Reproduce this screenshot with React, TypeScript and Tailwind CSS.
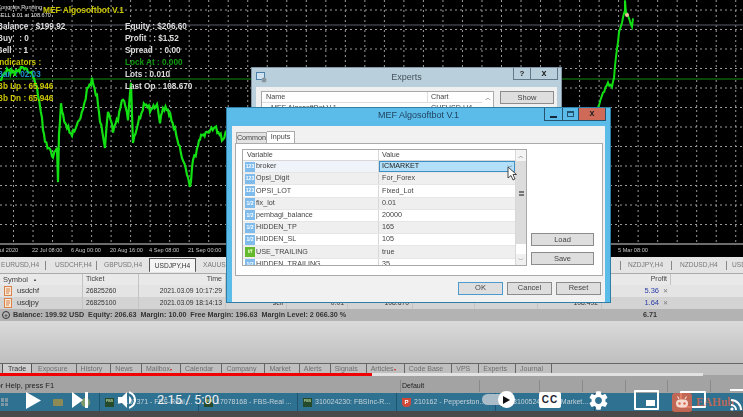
import React from "react";
import { MdSettings, MdVolumeUp } from "react-icons/md";

// rough price line, read off the picture; noise added so it looks like H4 candles
const leftPts = [
  [0, 80], [7, 70], [15, 73], [23, 67], [33, 75], [38, 93], [42, 120], [45, 142], [50, 150], [53, 157],
  [57, 147], [58, 181], [59, 137], [61, 103], [63, 117], [67, 127], [72, 135], [78, 123], [83, 110], [87, 90],
  [92, 80], [97, 97], [100, 120], [105, 147], [108, 110], [113, 130], [118, 118], [123, 97], [128, 118], [131, 83],
  [133, 143], [138, 123], [145, 103], [150, 110], [157, 105], [160, 122], [163, 108], [168, 110], [175, 130],
  [182, 157], [187, 173], [190, 188], [193, 160], [197, 150], [200, 137], [208, 132], [215, 127], [223, 140], [228, 130],
];
const rightPts = [
  [598, 107], [603, 93], [608, 83], [612, 87], [614, 77], [616, 57], [619, 33], [622, 22], [625, 10], [625, 0],
  [626, 14], [628, 15], [632, 28], [633, 17], [634, 28],
];

const jagged = (pts: number[][], amp: number) => {
  let d = "";
  let n = 0;
  for (let i = 0; i < pts.length - 1; i++) {
    const [x1, y1] = pts[i];
    const [x2, y2] = pts[i + 1];
    const steps = Math.max(1, Math.round(Math.abs(x2 - x1) / 1.2));
    for (let s = 0; s < steps; s++) {
      const t = s / steps;
      const off = Math.sin(n * 2.3) * Math.cos(n * 0.7) * amp;
      d += `${d ? "L" : "M"}${(x1 + (x2 - x1) * t).toFixed(1)} ${(y1 + (y2 - y1) * t + off).toFixed(1)}`;
      n++;
    }
  }
  return d;
};

const hLines = Array.from({ length: 12 }, (_, i) => 10 + i * 19.5);
const vLines = Array.from({ length: 38 }, (_, i) => 13.5 + i * 19.52);

const Chart = () => (
  <svg width="743" height="257" className="absolute left-0 top-0">
    {hLines.map((y) => (
      <line key={y} x1="0" x2="743" y1={y} y2={y} stroke="#9a9a9a" strokeDasharray="2 3" />
    ))}
    {vLines.map((x) => (
      <line key={x} x1={x} x2={x} y1="0" y2="243" stroke="#9a9a9a" strokeDasharray="2 3" />
    ))}
    <line x1="0" x2="743" y1="25" y2="25" stroke="#5c5c6e" />
    <line x1="0" x2="743" y1="79" y2="79" stroke="#0d5f0d" strokeWidth="1.6" />
    <line x1="0" x2="743" y1="244" y2="244" stroke="#d8d8d8" />
    <path d={jagged(leftPts, 3)} fill="none" stroke="#12e012" strokeWidth="2.2" />
    <path d={jagged(rightPts, 1.5)} fill="none" stroke="#12e012" strokeWidth="2" />
    <circle cx="627" cy="15" r="2" fill="#f2b9a0" />
  </svg>
);

const Overlay = () => (
  <>
    <div className="absolute left-0 top-[3px] flex flex-col whitespace-nowrap text-[5.6px] leading-[8px] text-[#e6e6e6]">
      <span className="-ml-[3px]">Congrats Running</span>
      <span className="-ml-[3px]">SELL 0.01 at 108.670</span>
    </div>
    <div className="absolute left-[43px] top-[3px] text-[8.4px] font-bold leading-[14px] text-[#c9c400]">MEF Algosoftbot V.1</div>
    <div className="absolute -left-[3px] top-[21px] flex flex-col whitespace-nowrap text-[8.2px] font-bold leading-[12px] text-[#dcdcdc]">
      <span>Balance : $199.92</span>
      <span>Buy &nbsp; : 0</span>
      <span>Sell &nbsp; : 1</span>
      <span className="text-[#c9c400]">Indicators :</span>
      <span className="text-[#1f8fc9]">Bar &nbsp;: 02.03</span>
      <span className="text-[#c9c400]">Bb Up : 65.946</span>
      <span className="text-[#c9c400]">Bb Dn : 65.946</span>
    </div>
    <div className="absolute left-[125px] top-[21px] flex flex-col whitespace-nowrap text-[8.2px] font-bold leading-[12px] text-[#dcdcdc]">
      <span>Equity : $206.60</span>
      <span>Profit &nbsp; : $1.52</span>
      <span>Spread &nbsp; : 0.00</span>
      <span className="text-[#0f9a0f]">Lock At : 0.000</span>
      <span>Lots : 0.010</span>
      <span>Last Op : 108.670</span>
    </div>
  </>
);

const AxisDates = () => (
  <div className="absolute left-0 top-[246px] flex w-[743px] whitespace-nowrap text-[5.6px] leading-[9px] text-[#c8c8c8]">
    <span className="-ml-[3px] w-[35px] shrink-0">Jul 2020</span>
    <span className="w-[39px] shrink-0">22 Jul 08:00</span>
    <span className="w-[39px] shrink-0">6 Aug 00:00</span>
    <span className="w-[39px] shrink-0">20 Aug 16:00</span>
    <span className="w-[39px] shrink-0">4 Sep 08:00</span>
    <span className="w-[39px] shrink-0">21 Sep 00:00</span>
    <span className="ml-auto w-[125px] shrink-0">5 Mar 08:00</span>
  </div>
);

const PairTabs = () => (
  <div className="flex h-[16px] items-center overflow-hidden whitespace-nowrap bg-[#e4e4e4] text-[6.6px] text-[#777]">
    <span className="-ml-[3px] w-[48px] shrink-0 pl-[4px]">EURUSD,H4</span>
    <span className="h-[9px] w-px shrink-0 bg-[#888]" />
    <span className="w-[50px] shrink-0 pl-[9px]">USDCHF,H4</span>
    <span className="h-[9px] w-px shrink-0 bg-[#888]" />
    <span className="w-[52px] shrink-0 pl-[7px]">GBPUSD,H4</span>
    <span className="flex h-[14px] w-[47px] shrink-0 items-center justify-center rounded-[1px] border border-[#555] border-b-0 bg-[#f4f4f4] text-[#333]">USDJPY,H4</span>
    <span className="w-[424px] shrink-0 pl-[7px]">XAUUSD,H4</span>
    <span className="h-[9px] w-px shrink-0 bg-[#888]" />
    <span className="w-[50px] shrink-0 pl-[7px]">NZDJPY,H4</span>
    <span className="h-[9px] w-px shrink-0 bg-[#888]" />
    <span className="w-[54px] shrink-0 pl-[8px]">NZDUSD,H4</span>
    <span className="h-[9px] w-px shrink-0 bg-[#888]" />
    <span className="shrink-0 pl-[5px]">USDCAD,H4</span>
  </div>
);

const gridCols = "grid grid-cols-[83px_56px_87px_61px_61px_65px_62px_63px_64px_69px_1fr]";

const Cell = ({ children, right }: { children?: React.ReactNode; right?: boolean }) => (
  <div className={`flex items-center border-r border-[#c4c4c4] px-[3px] ${right ? "justify-end" : ""}`}>{children}</div>
);

const OrderIcon = () => (
  <svg width="8" height="10" viewBox="0 0 8 10" className="mr-[5px] ml-[1px] shrink-0">
    <rect x="0.5" y="0.5" width="7" height="9" fill="#f7e7d4" stroke="#d9824a" />
    <path d="M2 3h4M2 5h4M2 7h3" stroke="#d9824a" />
  </svg>
);

const OrderRow = ({ sym, ticket, time, price, profit, bg }: { sym: string; ticket: string; time: string; price: string; profit: string; bg: string }) => (
  <div className={`${gridCols} h-[12px] text-[6.8px] text-[#333] ${bg}`}>
    <Cell>
      <OrderIcon />
      <span className="text-[7.5px]">{sym}</span>
    </Cell>
    <Cell>{ticket}</Cell>
    <Cell right>{time}</Cell>
    <Cell right>sell</Cell>
    <Cell right>0.01</Cell>
    <Cell right>108.670</Cell>
    <Cell />
    <Cell />
    <Cell right>{price}</Cell>
    <div className="flex items-center justify-end gap-[4px] pr-[3px]">
      <span className="text-[7.5px] text-[#2b3fa8]">{profit}</span>
      <span className="text-[6px] text-[#777]">✕</span>
    </div>
    <div />
  </div>
);

const OrdersTable = () => (
  <div className="flex flex-col">
    <div className={`${gridCols} h-[12px] border-t border-[#aaa] bg-[#e9e9e9] text-[7px] text-[#444]`}>
      <Cell>
        <span className="text-[7.5px]">Symbol</span>
        <span className="ml-[5px] text-[4px]">▲</span>
      </Cell>
      <Cell>Ticket</Cell>
      <Cell right>Time</Cell>
      <Cell />
      <Cell />
      <Cell />
      <Cell />
      <Cell />
      <Cell />
      <Cell right>Profit</Cell>
      <div />
    </div>
    <OrderRow sym="usdchf" ticket="26825260" time="2021.03.09 10:17:29" price="0.92992" profit="5.36" bg="bg-[#e4e4e4]" />
    <OrderRow sym="usdjpy" ticket="26825100" time="2021.03.09 18:14:13" price="108.492" profit="1.64" bg="bg-[#d3d3d3]" />
    <div className="flex h-[12px] items-center bg-[#b3b3b3] text-[7.2px] font-bold text-[#333]">
      <span className="ml-[2px] mr-[2px] flex h-[8px] w-[8px] items-center justify-center rounded-full border border-[#333] text-[6px] leading-none">+</span>
      <span className="ml-[1px] whitespace-pre">Balance: 199.92 USD  Equity: 206.63  Margin: 10.00  Free Margin: 196.63  Margin Level: 2 066.30 %</span>
      <span className="ml-auto mr-[86px]">6.71</span>
    </div>
  </div>
);

const bottomTabs = ["Exposure", "History", "News", "Mailbox", "Calendar", "Company", "Market", "Alerts", "Signals", "Articles", "Code Base", "VPS", "Experts", "Journal"];

const BottomTabs = () => (
  <div className="flex h-[12px] items-start overflow-hidden whitespace-nowrap border-t border-[#666] bg-[#bfbfbf] text-[7px] leading-[10px] text-[#6e6e6e]">
    <span className="ml-[2px] mr-[5px] h-[12px] w-[30px] shrink-0 border-x border-[#555] bg-[#cfcfcf] pl-[5px] font-medium text-[#333]">Trade</span>
    {bottomTabs.map((t) => (
      <span key={t} className="mr-[3px] shrink-0 border-r border-[#666] pl-[1px] pr-[8px]">
        {t}
        {(t === "Mailbox" || t === "Articles") && <span className="text-[4px] text-[#d02020]">▾</span>}
      </span>
    ))}
  </div>
);

const StatusBar = () => (
  <div className="flex h-[18px] items-end overflow-hidden whitespace-nowrap bg-[#a3a3a3] pb-[1px] text-[7.5px] leading-[12px] text-[#222]">
    <span className="-ml-[8px] w-[408px] shrink-0">For Help, press F1</span>
    <span className="h-[12px] w-[79px] shrink-0 border-l border-[#8a8a8a] pl-[1px] text-[7px]">Default</span>
    <span className="h-[12px] w-[60px] shrink-0 border-l border-[#8a8a8a]" />
    <span className="h-[12px] w-[43px] shrink-0 border-l border-[#8a8a8a]" />
    <span className="h-[12px] w-[43px] shrink-0 border-l border-[#8a8a8a]" />
    <span className="h-[12px] w-[42px] shrink-0 border-l border-[#8a8a8a]" />
    <span className="h-[12px] w-[43px] shrink-0 border-l border-[#8a8a8a]" />
    <span className="h-[12px] w-[33px] shrink-0 border-l border-[#8a8a8a]" />
  </div>
);

const TaskItem = ({ label, red }: { label: string; red?: boolean }) => (
  <div className="flex h-[18px] w-[99px] shrink-0 items-center gap-[3px] overflow-hidden whitespace-nowrap border-r border-[#1f5470] pl-[5px] text-[7px] text-[#c6d3da]">
    {red ? (
      <span className="flex h-[9px] w-[9px] shrink-0 items-center justify-center rounded-b-[4px] bg-[#d04a3a] text-[6px] font-bold text-white">P</span>
    ) : (
      <span className="flex h-[9px] w-[9px] shrink-0 items-center justify-center bg-[#254a2c] text-[3.5px] font-bold text-[#b9d6a0]">FBS</span>
    )}
    <span>{label}</span>
  </div>
);

const TaskBar = () => (
  <div className="flex h-[18px] items-center overflow-hidden bg-[#2f7191]">
    <div className="flex h-full w-[100px] shrink-0 items-center border-r border-[#1f5470] pl-[1px]">
      <div className="grid h-[8px] w-[7px] grid-cols-2 gap-px">
        <span className="bg-[#7d97a5]" />
        <span className="bg-[#7d97a5]" />
        <span className="bg-[#7d97a5]" />
        <span className="bg-[#7d97a5]" />
      </div>
      <span className="ml-[45px] h-[7px] w-[10px] rounded-[1px] bg-[#8d8a55]" />
      <span className="ml-[18px] h-[9px] w-[9px] rounded-full bg-[#7c9a6a]" />
    </div>
    <TaskItem label="14107371 - FBS-Real ..." />
    <TaskItem label="17078168 - FBS-Real ..." />
    <TaskItem label="310024230: FBSInc-R..." />
    <TaskItem red label="210162 - Pepperston..." />
    <TaskItem label="310052422: IC Market..." />
  </div>
);

const Btn = ({ label, cls }: { label: string; cls: string }) => (
  <div className={`flex items-center justify-center border border-[#8c8c8c] bg-[#dedede] text-[7.5px] text-[#444] ${cls}`}>{label}</div>
);

const rows = [
  { name: "broker", value: "ICMARKET", icon: "123", kind: "b" },
  { name: "Opsi_Digit", value: "For_Forex", icon: "123", kind: "b" },
  { name: "OPSI_LOT", value: "Fixed_Lot", icon: "123", kind: "b" },
  { name: "fix_lot", value: "0.01", icon: "1/2", kind: "b" },
  { name: "pembagi_balance", value: "20000", icon: "1/2", kind: "b" },
  { name: "HIDDEN_TP", value: "165", icon: "1/2", kind: "b" },
  { name: "HIDDEN_SL", value: "105", icon: "1/2", kind: "b" },
  { name: "USE_TRAILING", value: "true", icon: "t/f", kind: "g" },
  { name: "HIDDEN_TRAILING", value: "35", icon: "1/2", kind: "b" },
];

const InputsTable = () => (
  <div className="flex h-[117px] w-[285px] shrink-0 overflow-hidden border border-[#a8a8a8] bg-white text-[7.2px] text-[#444]">
    <div className="flex w-[273px] flex-col">
      <div className="flex h-[11px] shrink-0 items-center border-b border-[#d8d8d8] bg-white">
        <div className="w-[136px] border-r border-[#d8d8d8] pl-[4px]">Variable</div>
        <div className="pl-[3px]">Value</div>
      </div>
      {rows.map((r, i) => (
        <div key={r.name} className={`flex h-[12.2px] shrink-0 items-center border-b border-[#e6e6e6] ${i === 0 ? "bg-[#eef4f9]" : i % 2 === 1 ? "bg-[#f0efef]" : "bg-white"}`}>
          <div className="flex h-full w-[136px] items-center gap-[1px] border-r border-[#d8d8d8] pl-[2px]">
            <span className={`flex h-[10px] w-[10px] shrink-0 items-center justify-center text-[5px] font-bold leading-none ${r.kind === "g" ? "bg-[#63b82c] text-[#eaffd0]" : "bg-[#7fbcec] text-white"}`}>{r.icon}</span>
            <span>{r.name}</span>
          </div>
          {i === 0 ? (
            <div className="flex h-full flex-1 items-center justify-between border border-[#3f8fc7] bg-[#b3dff8] pl-[2px] pr-[1px] text-[#222]">
              <span>{r.value}</span>
              <span className="text-[6px] leading-none text-[#333]">﹀</span>
            </div>
          ) : (
            <div className="pl-[3px]">{r.value}</div>
          )}
        </div>
      ))}
    </div>
    <div className="flex w-[11px] shrink-0 flex-col items-center border-l border-[#d8d8d8] bg-[#dcdcdc]">
      <span className="flex h-[11px] w-full items-center justify-center bg-[#f4f4f4] text-[6px] leading-none text-[#555]">︿</span>
      <span className="mt-[30px] h-[5px] w-[5px] border-y-2 border-[#777]" />
      <span className="mt-auto h-[10px] w-full bg-white" />
      <span className="flex h-[11px] w-full items-center justify-center bg-[#f0f0f0] text-[6px] leading-none text-[#555]">﹀</span>
    </div>
  </div>
);

const ExpertsWindow = () => (
  <div className="absolute left-[251px] top-[67px] flex h-[60px] w-[311px] flex-col border border-[#7f97a6] bg-[#b9d0dc]">
    <div className="relative flex h-[19px] shrink-0 items-center justify-center text-[9px] text-[#44525c]">
      <svg width="11" height="11" viewBox="0 0 11 11" className="absolute left-[4px] top-[4px]">
        <rect x="0.5" y="0.5" width="8" height="7" fill="#cfe2f2" stroke="#4d80a8" />
        <circle cx="8" cy="8" r="2.5" fill="#8a97a0" />
      </svg>
      Experts
      <div className="absolute right-[3px] top-0 flex h-[12px]">
        <span className="flex w-[18px] items-center justify-center border border-t-0 border-[#62798a] text-[8px] font-bold text-[#222]">?</span>
        <span className="flex w-[27px] items-center justify-center border border-l-0 border-t-0 border-[#62798a] text-[9px] font-bold text-[#222]">x</span>
      </div>
    </div>
    <div className="mx-[4px] flex flex-1 gap-[6px] bg-[#f0f0f0] pl-[5px] pr-[3px] pt-[4px] text-[7.2px] text-[#444]">
      <div className="flex h-[40px] w-[233px] shrink-0 border border-[#aaa] bg-white">
        <div className="flex w-[222px] flex-col">
          <div className="flex h-[11px] border-b border-[#ddd]">
            <span className="w-[166px] border-r border-[#ddd] pl-[4px]">Name</span>
            <span className="pl-[3px]">Chart</span>
          </div>
          <div className="flex h-[10px] items-center">
            <span className="w-[166px] pl-[9px]">MEF AlgosoftBot V.1</span>
            <span className="pl-[3px]">CHFUSD,H4</span>
          </div>
        </div>
        <span className="flex h-[11px] w-[11px] items-center justify-center text-[6px] leading-none">︿</span>
      </div>
      <Btn label="Show" cls="h-[13px] w-[54px]" />
    </div>
  </div>
);

const MefWindow = () => (
  <div className="absolute left-[227px] top-[108px] flex h-[194px] w-[383px] flex-col bg-[#5bbbe9] shadow-[0_0_0_1px_#2f7ea8]">
    <div className="relative flex h-[18px] shrink-0 items-center justify-center pb-[3px] text-[9px] text-[#1f3f5c]">
      MEF Algosoftbot V.1
      <div className="absolute right-[4px] top-0 flex h-[13px] border-b border-x border-[#25526e]">
        <span className="flex w-[17px] items-end justify-center pb-[2px]">
          <span className="h-[2px] w-[7px] bg-[#16283a]" />
        </span>
        <span className="flex w-[16px] items-center justify-center border-l border-[#25526e]">
          <span className="h-[6px] w-[7px] border border-[#25526e] border-t-2" />
        </span>
        <span className="flex w-[27px] items-center justify-center border-l border-[#25526e] bg-[#cf6a58] text-[9px] font-bold text-[#222]">x</span>
      </div>
    </div>
    <div className="mx-[5px] flex flex-1 flex-col bg-[#f1f1f1] pl-[3px] pr-[2px] pt-[5px]">
      <div className="flex h-[12px] items-end pl-[1px] text-[7.2px] text-[#444]">
        <span className="flex h-[11px] w-[31px] items-center justify-center border border-b-0 border-[#aaa] bg-[#e3e3e3]">Common</span>
        <span className="flex h-[12px] w-[28px] items-center justify-center border border-b-0 border-l-0 border-[#aaa] bg-white">Inputs</span>
      </div>
      <div className="flex h-[133px] gap-[4px] border border-[#aaa] bg-white pl-[6px] pr-[8px] pt-[5px]">
        <InputsTable />
        <div className="flex flex-1 flex-col justify-end gap-[6px] pb-[10px]">
          <Btn label="Load" cls="h-[13px] w-[63px]" />
          <Btn label="Save" cls="h-[13px] w-[63px]" />
        </div>
      </div>
      <div className="flex flex-1 items-center justify-end gap-[4px] pb-[2px] pr-[2px]">
        <Btn label="OK" cls="h-[13px] w-[45px] !border-[#4b9bd0]" />
        <Btn label="Cancel" cls="h-[13px] w-[45px]" />
        <Btn label="Reset" cls="h-[13px] w-[45px]" />
      </div>
    </div>
  </div>
);

const Cursor = () => (
  <svg width="10" height="15" viewBox="0 0 10 15" className="absolute left-[507px] top-[166px]">
    <path d="M1 1v11l3-2.5 2 4.5 2-1-2-4.5h3.5z" fill="#fff" stroke="#333" strokeWidth="0.9" />
  </svg>
);

// youtube player controls lying over the video
const PlayerControls = () => (
  <div className="absolute left-0 top-[390px] h-[24px] w-[743px] text-white">
    <svg width="15" height="17" viewBox="0 0 15 17" className="absolute left-[26px] top-[2px]">
      <path d="M0 0l15 8.5L0 17z" fill="#fff" />
    </svg>
    <svg width="16" height="16" viewBox="0 0 16 16" className="absolute left-[72px] top-[2px]">
      <path d="M0 0l11 8L0 16z" fill="#fff" />
      <rect x="13" y="0" width="3" height="16" fill="#fff" />
    </svg>
    <MdVolumeUp size={24} className="absolute left-[115px] top-[-2px]" />
    <span className="absolute left-[157px] top-[1px] whitespace-nowrap font-['Roboto',sans-serif] text-[13px] leading-[18px] text-[#f0f0f0]">2:15 / 5:00</span>
    <span className="absolute left-[482px] top-[4px] h-[11px] w-[30px] rounded-full bg-[#a9bcc7]" />
    <span className="absolute left-[498px] top-[1px] flex h-[17px] w-[17px] items-center justify-center rounded-full bg-white">
      <svg width="7" height="8" viewBox="0 0 7 8">
        <path d="M0 0l7 4-7 4z" fill="#111" />
      </svg>
    </span>
    <span className="absolute left-[539px] top-[2px] flex h-[16px] w-[22px] items-center justify-center rounded-[2px] bg-white text-[10px] font-bold leading-none tracking-[1px] text-[#223]">CC</span>
    <MdSettings size={23} className="absolute left-[587px] top-[-1px]" />
    <span className="absolute left-[634px] top-0 flex h-[20px] w-[25px] items-end justify-end rounded-[1px] border-2 border-white pb-[2px] pr-[2px]">
      <span className="h-[6px] w-[9px] bg-white" />
    </span>
    <span className="absolute left-[680px] top-[1px] h-[17px] w-[26px] rounded-[1px] border-2 border-white" />
    <span className="absolute left-[672px] top-[3px] flex h-[19px] w-[20px] items-center justify-center rounded-[3px] bg-[#d9664a]/85">
      <svg width="14" height="13" viewBox="0 0 14 13">
        <path d="M4 3L2.5 0.5M10 3l1.5-2.5" stroke="#f6d9cf" strokeWidth="1.2" />
        <rect x="1" y="3.5" width="12" height="8" rx="4" fill="#f6d9cf" />
        <circle cx="4.5" cy="7.5" r="1.2" fill="#d9664a" />
        <circle cx="9.5" cy="7.5" r="1.2" fill="#d9664a" />
      </svg>
    </span>
    <span className="absolute left-[696px] top-[3px] font-['Liberation_Serif',serif] text-[11.5px] font-bold leading-[18px] text-[#d9664a]/80">EAHub</span>
    <svg width="14" height="23" viewBox="0 0 14 23" className="absolute left-[729px] top-[-1px]">
      <path d="M1 1h13M2 11a10 10 0 0 1 10 10M2 16a5 5 0 0 1 5 5" fill="none" stroke="#fff" strokeWidth="2" />
      <circle cx="3" cy="20" r="1.6" fill="#fff" />
    </svg>
  </div>
);

export default function App() {
  return (
    <div className="relative h-[417px] w-[743px] overflow-hidden bg-black font-['Liberation_Sans',Arial,sans-serif]">
      <div className="flex h-full flex-col blur-[0.4px]">
        <div className="relative h-[257px] shrink-0 overflow-hidden bg-black">
          <Chart />
          <Overlay />
          <AxisDates />
        </div>
        <PairTabs />
        <OrdersTable />
        <div className="h-[42px] shrink-0 bg-gradient-to-b from-[#dadada] to-[#bfbfbf]" />
        <BottomTabs />
        <StatusBar />
        <TaskBar />
        <div className="flex-1 bg-[#4a4a4a]" />
        <ExpertsWindow />
        <MefWindow />
        <Cursor />
      </div>
      <div className="absolute left-0 top-[373px] flex h-[3px] w-[743px]">
        <span className="w-[372px] bg-[#f00000]" />
        <span className="w-[331px] bg-[#e2e2e2]" />
      </div>
      <PlayerControls />
    </div>
  );
}
